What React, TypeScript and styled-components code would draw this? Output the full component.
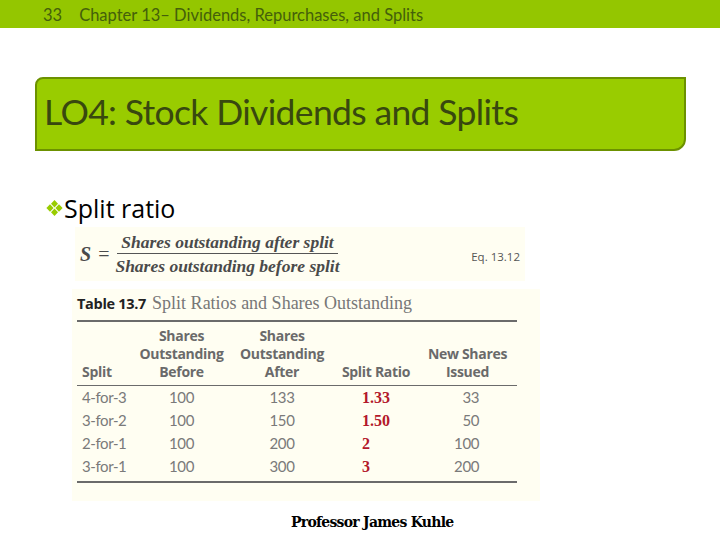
import React from "react";
import styled, { createGlobalStyle } from "styled-components";

const Global = createGlobalStyle`
  html, body { margin: 0; padding: 0; background: #ffffff; }
  body { width: 720px; height: 540px; overflow: hidden; font-family: Lato, "Liberation Sans", sans-serif; }
`;

const Page = styled.div`
  width: 720px;
  height: 540px;
  display: flex;
  flex-direction: column;
  background: #fff;
`;

const TopBar = styled.div`
  height: 28px;
  background: #94c600;
  display: flex;
  align-items: center;
  padding-left: 43px;
  gap: 17px;
  font-family: Lato, "Open Sans", sans-serif;
  font-size: 16.5px;
  color: #44600a;
  box-sizing: border-box;
  padding-top: 1px;
`;

const TitleBox = styled.div`
  margin: 49px 0 0 35px;
  width: 651px;
  height: 74px;
  box-sizing: border-box;
  background: #99cc00;
  border: 2px solid #6c9100;
  border-radius: 8px 0 12px 0;
  display: flex;
  align-items: center;
  padding-left: 7px;
  padding-bottom: 5px;
  font-family: Lato, "Open Sans", sans-serif;
  font-size: 35.5px;
  letter-spacing: -0.65px;
  color: #38480f;
`;

const Bullet = styled.div`
  margin: 44px 0 0 46px;
  display: flex;
  align-items: center;
  gap: 1px;
  font-family: "Open Sans", "DejaVu Sans", sans-serif;
  font-size: 25px;
  color: #000;
  line-height: 26px;
`;

const Equation = styled.div`
  margin: 6px 0 0 75px;
  width: 450px;
  height: 54px;
  background: #fffef2;
  display: flex;
  align-items: center;
  font-family: "Liberation Serif", serif;
  color: #4a4a4a;
`;

const SVar = styled.span`
  font-style: italic;
  font-weight: bold;
  font-size: 20px;
  margin-left: 5px;
`;

const Eq = styled.span`
  font-size: 20px;
  margin: 0 6px 0 7px;
`;

const Fraction = styled.div`
  display: flex;
  flex-direction: column;
  align-items: center;
  font-style: italic;
  font-weight: bold;
  font-size: 17.5px;
  line-height: 18px;
`;

const Num = styled.span`
  padding: 0 4px 2px;
  border-bottom: 1px solid #555;
`;

const Den = styled.span`
  padding-top: 3px;
`;

const EqLabel = styled.span`
  margin-left: auto;
  margin-right: 5px;
  font-family: "Open Sans", sans-serif;
  font-size: 11.5px;
  color: #555;
  padding-top: 4px;
`;

const TableImg = styled.div`
  margin: 8px 0 0 72px;
  width: 468px;
  height: 212px;
  background: #fffef2;
  box-sizing: border-box;
  padding: 1px 23px 0 5px;
  display: flex;
  flex-direction: column;
`;

const Caption = styled.div`
  display: flex;
  align-items: baseline;
  gap: 6px;
  height: 26px;
  line-height: 26px;
`;

const CapLabel = styled.span`
  font-family: "Open Sans", sans-serif;
  font-weight: bold;
  font-size: 14.5px;
  color: #222;
  letter-spacing: -0.3px;
`;

const CapText = styled.span`
  font-family: "Liberation Serif", serif;
  font-size: 18px;
  color: #777;
`;

const Grid = styled.div`
  display: grid;
  grid-template-columns: 56px 97px 104px 84px 99px;
  border-top: 2px solid #6b6b6b;
  border-bottom: 2px solid #6b6b6b;
  margin-top: 4px;
`;

const Head = styled.div<{ $align?: string }>`
  font-family: "Open Sans", sans-serif;
  font-weight: bold;
  font-size: 14px;
  line-height: 18px;
  color: #6a6a6a;
  letter-spacing: -0.3px;
  text-align: ${(p) => p.$align || "center"};
  padding: 5px 0 4px ${(p) => (p.$align === "left" ? "5px" : "0")};
  border-bottom: 1.5px solid #6b6b6b;
  display: flex;
  flex-direction: column;
  justify-content: flex-end;
`;

const Cell = styled.div<{ $align?: string; $red?: boolean; $pl?: number; $pr?: number; $last?: boolean }>`
  font-family: ${(p) => (p.$red ? '"Liberation Serif", serif' : 'Lato, "Open Sans", sans-serif')};
  font-size: ${(p) => (p.$red ? "16px" : "15px")};
  letter-spacing: ${(p) => (p.$red ? "0" : "-0.4px")};
  line-height: 23px;
  color: ${(p) => (p.$red ? "#b3182b" : "#7a7a7a")};
  font-weight: ${(p) => (p.$red ? "bold" : "normal")};
  text-align: ${(p) => p.$align || "center"};
  padding-left: ${(p) => p.$pl || 0}px;
  padding-right: ${(p) => p.$pr || 0}px;
  padding-bottom: ${(p) => (p.$last ? 3 : 0)}px;
`;

const Footer = styled.div`
  margin: 13px 0 0 291px;
  font-family: "DejaVu Serif", "Liberation Serif", serif;
  font-weight: bold;
  font-size: 14px;
  letter-spacing: -0.75px;
  color: #000;
`;

const rows = [
  ["4-for-3", "100", "133", "1.33", "33"],
  ["3-for-2", "100", "150", "1.50", "50"],
  ["2-for-1", "100", "200", "2", "100"],
  ["3-for-1", "100", "300", "3", "200"],
];

const Diamonds = () => (
  <svg width="17" height="16" viewBox="0 0 17 16">
    <g fill="#99cc00">
      <polygon points="8.5,0 12,3.8 8.5,7.4 5,3.8" />
      <polygon points="4,4.3 7.6,8 4,11.7 0.4,8" />
      <polygon points="13,4.3 16.6,8 13,11.7 9.4,8" />
      <polygon points="8.5,8.6 12,12.2 8.5,16 5,12.2" />
    </g>
  </svg>
);

export default function App() {
  return (
    <Page>
      <Global />
      <TopBar>
        <span>33</span>
        <span>Chapter 13– Dividends, Repurchases, and Splits</span>
      </TopBar>
      <TitleBox>LO4: Stock Dividends and Splits</TitleBox>
      <Bullet>
        <Diamonds />
        <span>Split ratio</span>
      </Bullet>
      <Equation>
        <SVar>S</SVar>
        <Eq>=</Eq>
        <Fraction>
          <Num>Shares outstanding after split</Num>
          <Den>Shares outstanding before split</Den>
        </Fraction>
        <EqLabel>Eq. 13.12</EqLabel>
      </Equation>
      <TableImg>
        <Caption>
          <CapLabel>Table 13.7</CapLabel>
          <CapText>Split Ratios and Shares Outstanding</CapText>
        </Caption>
        <Grid>
          <Head $align="left">Split</Head>
          <Head>
            <span>Shares</span>
            <span>Outstanding</span>
            <span>Before</span>
          </Head>
          <Head>
            <span>Shares</span>
            <span>Outstanding</span>
            <span>After</span>
          </Head>
          <Head>Split Ratio</Head>
          <Head>
            <span>New Shares</span>
            <span>Issued</span>
          </Head>
          {rows.map((r, i) => {
            const last = i === rows.length - 1;
            return (
              <React.Fragment key={i}>
                <Cell $align="left" $pl={5} $last={last}>{r[0]}</Cell>
                <Cell $last={last}>{r[1]}</Cell>
                <Cell $last={last}>{r[2]}</Cell>
                <Cell $align="left" $pl={28} $red $last={last}>{r[3]}</Cell>
                <Cell $align="right" $pr={38} $last={last}>{r[4]}</Cell>
              </React.Fragment>
            );
          })}
        </Grid>
      </TableImg>
      <Footer>Professor James Kuhle</Footer>
    </Page>
  );
}
